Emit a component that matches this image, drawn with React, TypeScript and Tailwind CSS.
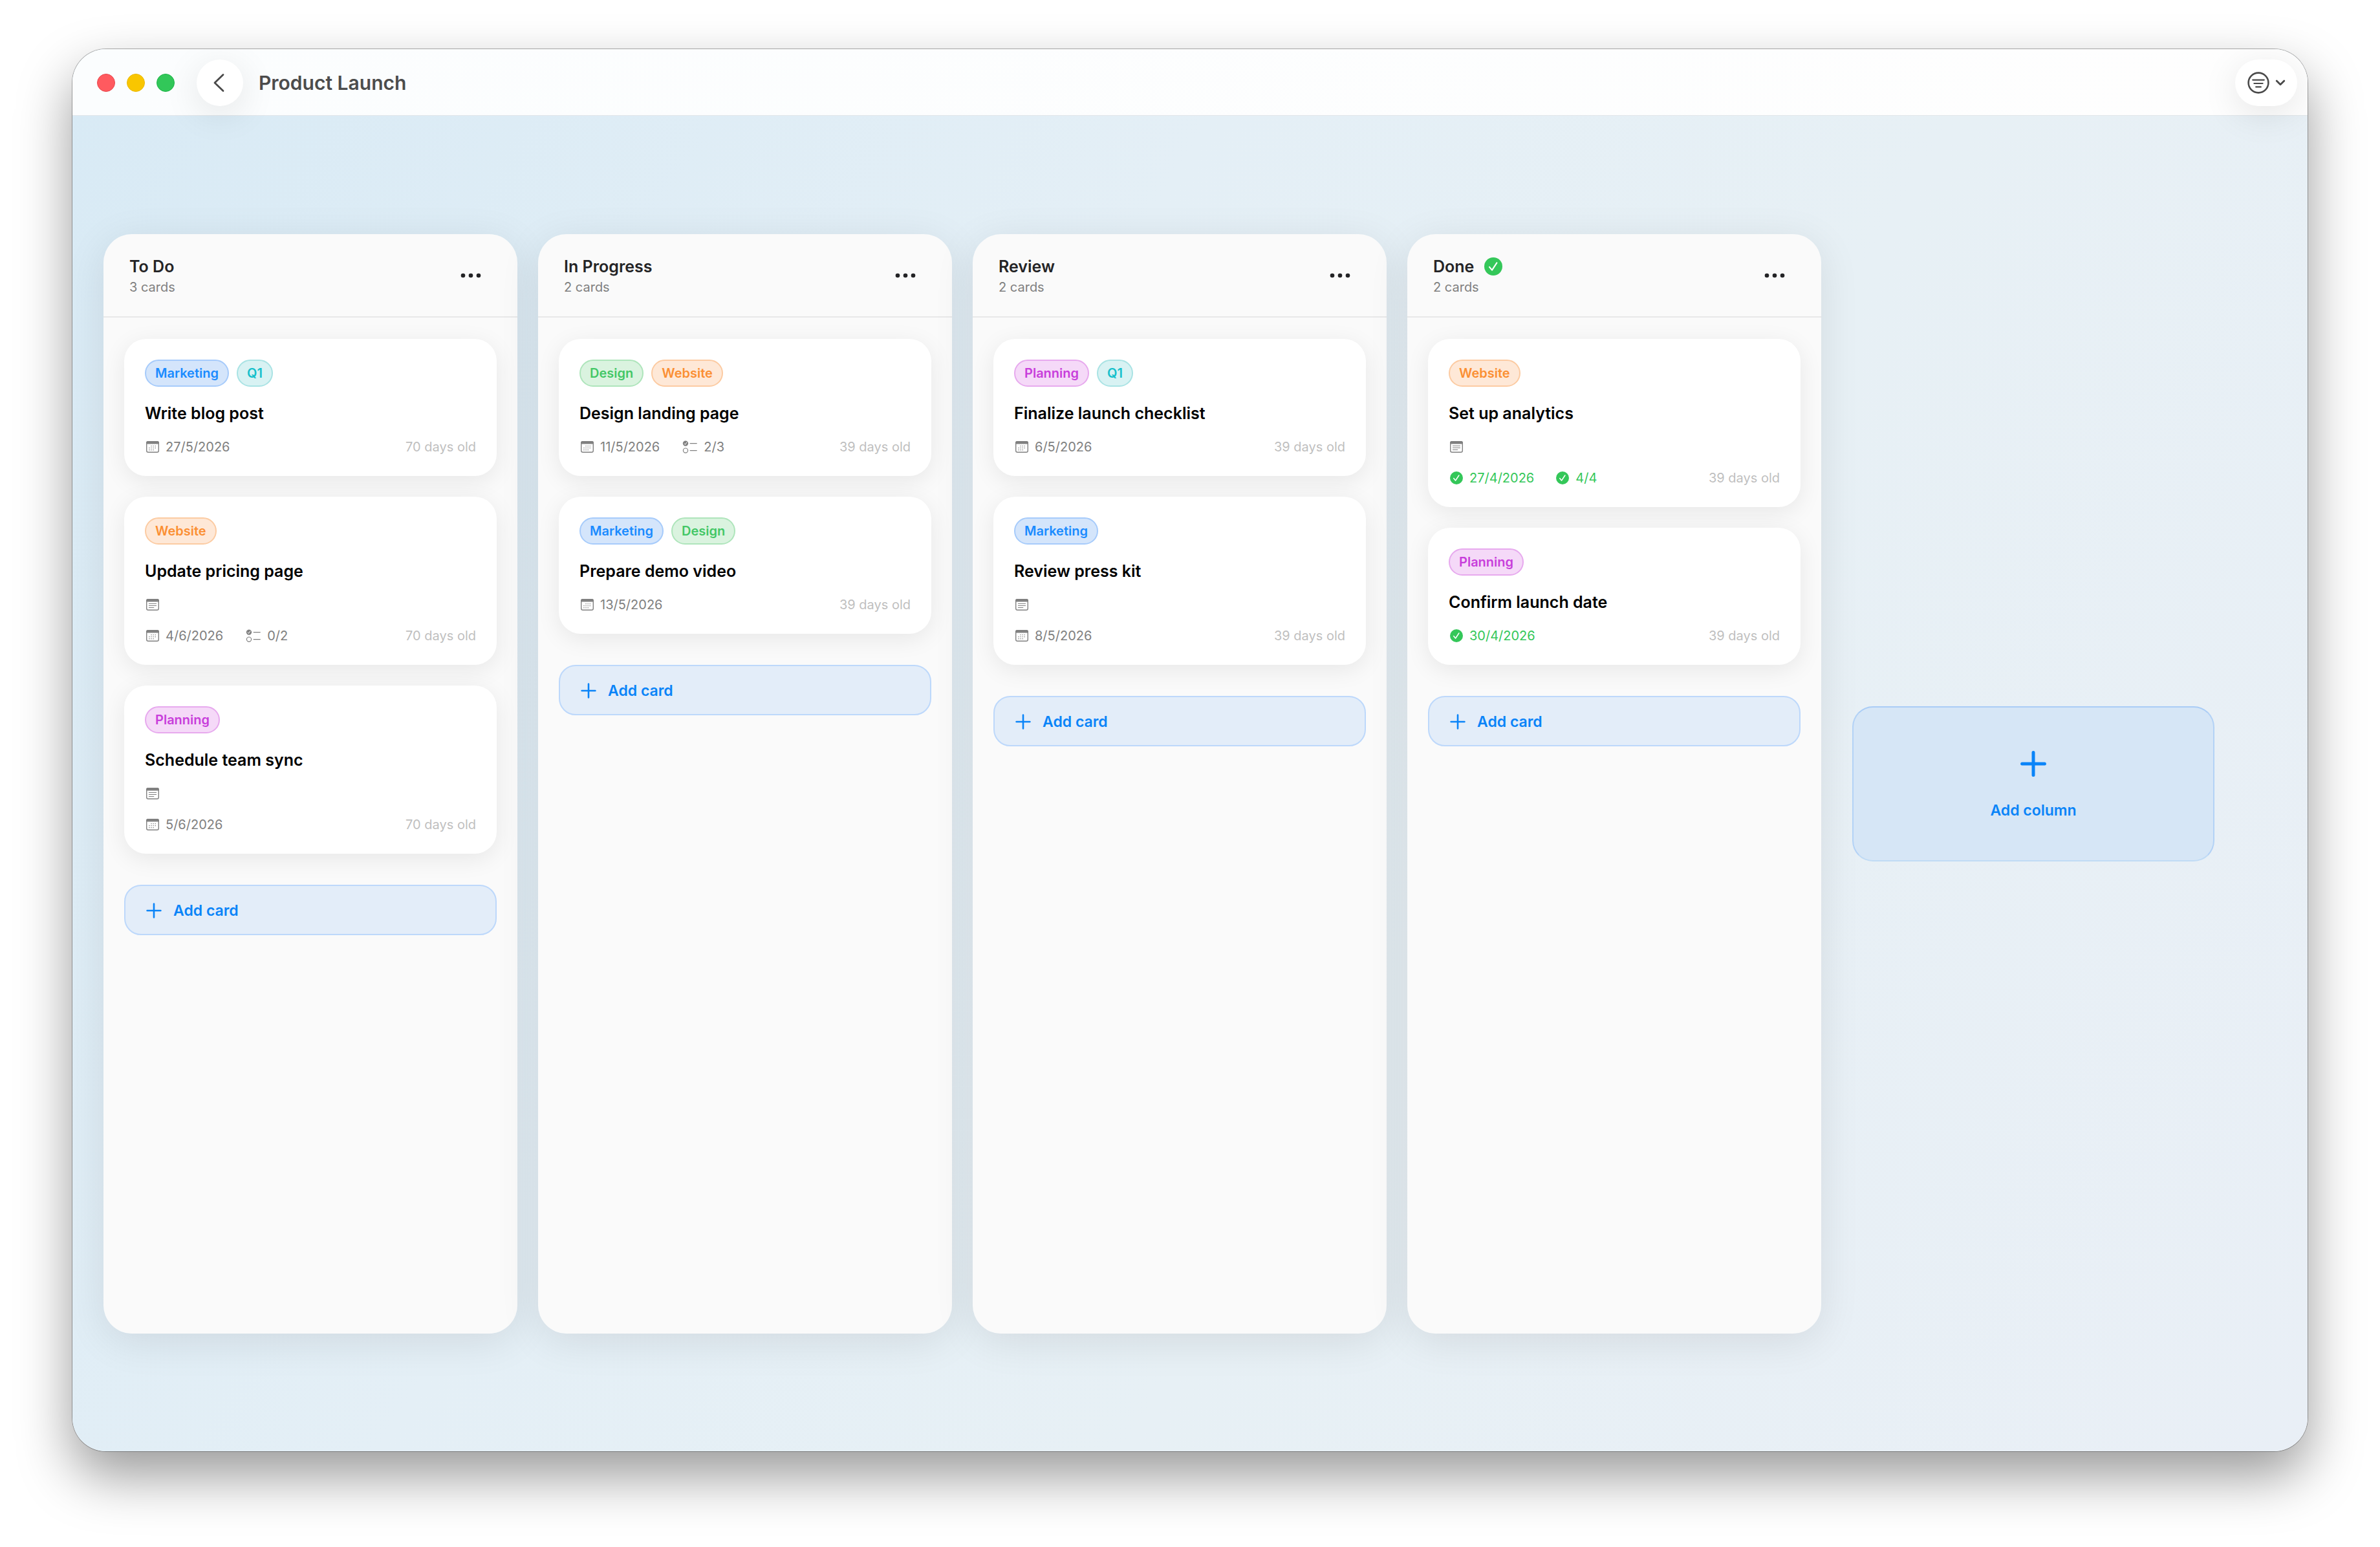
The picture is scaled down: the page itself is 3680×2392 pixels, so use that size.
import { useState } from "react";
import type { ReactNode } from "react";

type TagName = "Marketing" | "Q1" | "Design" | "Website" | "Planning";

type Card = {
  title: string;
  tags: TagName[];
  date: string;
  age: string;
  checklist?: string;
  notes?: boolean;
};

type Column = {
  name: string;
  done?: boolean;
  cards: Card[];
};

const TAG_STYLES: Record<TagName, string> = {
  Marketing: "border-[#a6cbfb] bg-[#d4e5fb] text-[#1a8bff]",
  Q1: "border-[#a9e3e4] bg-[#d8f2f3] text-[#16c0cb]",
  Design: "border-[#aee5bb] bg-[#daf3df] text-[#43c766]",
  Website: "border-[#fccba2] bg-[#fee8d7] text-[#fb8f33]",
  Planning: "border-[#e7a9ee] bg-[#f5d9f8] text-[#c83edb]"
};

const COLUMNS: Column[] = [
  {
    name: "To Do",
    cards: [
      { title: "Write blog post", tags: ["Marketing", "Q1"], date: "27/5/2026", age: "70 days old" },
      { title: "Update pricing page", tags: ["Website"], date: "4/6/2026", age: "70 days old", checklist: "0/2", notes: true },
      { title: "Schedule team sync", tags: ["Planning"], date: "5/6/2026", age: "70 days old", notes: true }
    ]
  },
  {
    name: "In Progress",
    cards: [
      { title: "Design landing page", tags: ["Design", "Website"], date: "11/5/2026", age: "39 days old", checklist: "2/3" },
      { title: "Prepare demo video", tags: ["Marketing", "Design"], date: "13/5/2026", age: "39 days old" }
    ]
  },
  {
    name: "Review",
    cards: [
      { title: "Finalize launch checklist", tags: ["Planning", "Q1"], date: "6/5/2026", age: "39 days old" },
      { title: "Review press kit", tags: ["Marketing"], date: "8/5/2026", age: "39 days old", notes: true }
    ]
  },
  {
    name: "Done",
    done: true,
    cards: [
      { title: "Set up analytics", tags: ["Website"], date: "27/4/2026", age: "39 days old", checklist: "4/4", notes: true },
      { title: "Confirm launch date", tags: ["Planning"], date: "30/4/2026", age: "39 days old" }
    ]
  }
];

function CheckCircle({ className }: { className: string }) {
  return (
    <svg viewBox="0 0 28 28" className={className} aria-hidden>
      <circle cx="14" cy="14" r="14" fill="#34c759" />
      <path d="M8 14.8l4 4.8 7.4-11.2" fill="none" stroke="#fff" strokeWidth="2.1" strokeLinecap="round" strokeLinejoin="round" />
    </svg>
  );
}

function CalendarIcon() {
  return (
    <svg viewBox="0 0 24 24" className="h-6 w-6 shrink-0" aria-hidden>
      <rect x="2.7" y="3.7" width="18.6" height="16.6" rx="2.6" fill="none" stroke="#808080" strokeWidth="1.4" />
      <path d="M2 7.6V6a3 3 0 0 1 3-3h14a3 3 0 0 1 3 3v1.6z" fill="#808080" />
      <g fill="#808080">
        <rect x="9.4" y="10" width="1.3" height="1.3" />
        <rect x="12.5" y="10" width="1.3" height="1.3" />
        <rect x="15.6" y="10" width="1.3" height="1.3" />
        <rect x="6.3" y="13" width="1.3" height="1.3" />
        <rect x="9.4" y="13" width="1.3" height="1.3" />
        <rect x="12.5" y="13" width="1.3" height="1.3" />
        <rect x="15.6" y="13" width="1.3" height="1.3" />
        <rect x="6.3" y="16" width="1.3" height="1.3" />
        <rect x="9.4" y="16" width="1.3" height="1.3" />
        <rect x="12.5" y="16" width="1.3" height="1.3" />
      </g>
    </svg>
  );
}

function NotesIcon() {
  return (
    <svg viewBox="0 0 24 24" className="h-6 w-6 shrink-0" role="img" aria-label="Notes">
      <rect x="2.7" y="3.7" width="18.6" height="16.6" rx="2.6" fill="none" stroke="#808080" strokeWidth="1.4" />
      <path d="M2 7.4V6a3 3 0 0 1 3-3h14a3 3 0 0 1 3 3v1.4z" fill="#808080" />
      <path d="M6.4 10.5h11.2M6.4 13.5h11.2M6.4 16.5h7.4" stroke="#808080" strokeWidth="1.1" strokeLinecap="round" />
    </svg>
  );
}

function ChecklistIcon() {
  return (
    <svg viewBox="0 0 28 24" className="h-6 w-7 shrink-0" aria-hidden>
      <circle cx="8" cy="6.6" r="4.2" fill="#808080" />
      <path d="M6.2 6.9l1.3 1.5 2.3-3.4" fill="none" stroke="#fff" strokeWidth="1" strokeLinecap="round" strokeLinejoin="round" />
      <circle cx="8" cy="17.6" r="3.6" fill="none" stroke="#808080" strokeWidth="1.2" />
      <path d="M15.2 6.6h10M15.2 17.6h10" stroke="#808080" strokeWidth="1.4" strokeLinecap="round" />
    </svg>
  );
}

function Meta({ icon, done, children }: { icon: ReactNode; done?: boolean; children: ReactNode }) {
  return (
    <span className={`flex items-center gap-2 ${done ? "text-[#34c759]" : "text-[#808080]"}`}>
      {done ? (
        <span className="flex h-6 w-6 items-center justify-center">
          <CheckCircle className="h-5 w-5" />
        </span>
      ) : (
        icon
      )}
      {children}
    </span>
  );
}

function BoardCard({ card, done }: { card: Card; done?: boolean }) {
  return (
    <article className="rounded-[34px] bg-white p-8 shadow-[0_8px_36px_rgba(0,0,0,0.08)]">
      <div className="flex gap-3">
        {card.tags.map((tag) => (
          <span
            key={tag}
            className={`flex h-[42px] items-center rounded-full border-2 px-[14px] text-[20px] font-semibold leading-6 ${TAG_STYLES[tag]}`}
          >
            {tag}
          </span>
        ))}
      </div>
      <h3 className="mt-[25px] text-[25px] font-semibold leading-8 text-black">{card.title}</h3>
      {card.notes ? (
        <div className="mt-6 flex h-6 items-center">
          <NotesIcon />
        </div>
      ) : null}
      <div className="mt-[23px] flex h-[26px] items-center gap-8 text-[20px] leading-6">
        <Meta icon={<CalendarIcon />} done={done}>
          {card.date}
        </Meta>
        {card.checklist ? (
          <Meta icon={<ChecklistIcon />} done={done}>
            {card.checklist}
          </Meta>
        ) : null}
        <span className="ml-auto text-[#bfbfbf]">{card.age}</span>
      </div>
    </article>
  );
}

function BoardColumn({ column }: { column: Column }) {
  return (
    <section className="flex h-full w-[640px] shrink-0 flex-col overflow-clip rounded-[44px] bg-[#fafafa]">
      <header className="flex h-[129px] shrink-0 items-center justify-between border-b-2 border-[#e8e8e9] px-10">
        <div className="pt-1">
          <div className="flex h-8 items-center gap-4">
            <h2 className="text-[25px] font-semibold leading-8 text-[#242426]">{column.name}</h2>
            {column.done ? <CheckCircle className="h-7 w-7" /> : null}
          </div>
          <p className="text-[20px] leading-8 text-[#808080]">{column.cards.length} cards</p>
        </div>
        <button type="button" aria-label={`${column.name} options`} className="flex h-12 w-16 items-center justify-center">
          <svg viewBox="0 0 32 8" className="h-2 w-8" fill="#242426" aria-hidden>
            <circle cx="4" cy="4" r="3.3" />
            <circle cx="16" cy="4" r="3.3" />
            <circle cx="28" cy="4" r="3.3" />
          </svg>
        </button>
      </header>
      <div className="flex flex-1 flex-col gap-8 px-8 pt-[33px]">
        {column.cards.map((card) => (
          <BoardCard key={card.title} card={card} done={column.done} />
        ))}
        <button
          type="button"
          className="mt-4 flex h-[78px] items-center gap-4 rounded-[26px] border-2 border-[#bdd8fb] bg-[#e3edf9] px-[30px] pt-0.5 text-[23px] font-semibold leading-8 text-[#0a84f8]"
        >
          <svg viewBox="0 0 28 28" className="h-7 w-7" aria-hidden>
            <path d="M14 3.6v20.8M3.6 14h20.8" stroke="currentColor" strokeWidth="2.6" strokeLinecap="round" />
          </svg>
          Add card
        </button>
      </div>
    </section>
  );
}

export default function App() {
  const [columns] = useState<Column[]>(COLUMNS);

  return (
    <div className="flex min-h-screen bg-white px-28 pb-[148px] pt-19 font-['Inter','Liberation_Sans',sans-serif]">
      <div className="flex min-w-0 flex-1 flex-col overflow-clip rounded-[52px] bg-[linear-gradient(122deg,#d8eaf5_0%,#e4eff6_38%,#e7f0f5_62%,#e9eff6_100%)] shadow-[0_0_0_1px_rgba(0,0,0,0.3),0_38px_84px_rgba(0,0,0,0.4)]">
        <header className="flex h-[103px] shrink-0 items-center border-b border-[#e2e6e9] bg-linear-to-r from-[#fbfdfe] to-[#fefefe] pl-[38px] pr-4 pt-0.5">
          <div className="flex gap-[18px]">
            <button type="button" aria-label="Close" className="h-7 w-7 rounded-full border border-[#e8474d] bg-[#ff5a5f]" />
            <button type="button" aria-label="Minimize" className="h-7 w-7 rounded-full border border-[#eab800] bg-[#f9c600]" />
            <button type="button" aria-label="Zoom" className="h-7 w-7 rounded-full border border-[#1db548] bg-[#32c759]" />
          </div>
          <button
            type="button"
            aria-label="Back"
            className="relative ml-[34px] flex h-18 w-18 items-center justify-center rounded-full bg-white shadow-[0_12px_56px_rgba(0,0,0,0.1)]"
          >
            <svg viewBox="0 0 36 36" className="h-9 w-9" fill="none" aria-hidden>
              <path d="M23 5.5L10 18l13 12.5" stroke="#4a4a4a" strokeWidth="2.8" strokeLinecap="round" strokeLinejoin="round" />
            </svg>
          </button>
          <h1 className="ml-6 text-[30px] font-semibold leading-10 text-[#4c4c4c]">Product Launch</h1>
          <button
            type="button"
            aria-label="Filter"
            className="relative ml-auto flex h-18 w-24 items-center justify-center gap-2 rounded-full bg-white shadow-[0_12px_56px_rgba(0,0,0,0.1)]"
          >
            <svg viewBox="0 0 36 36" className="h-9 w-9" fill="none" stroke="#4a4a4a" strokeLinecap="round" aria-hidden>
              <circle cx="18" cy="18" r="15.4" strokeWidth="2.6" />
              <path d="M9.2 13.6h17.6M11.4 19h13.2M14.2 24.4h7.6" strokeWidth="2.2" />
            </svg>
            <svg viewBox="0 0 16 16" className="h-4 w-4" fill="none" aria-hidden>
              <path d="M2.2 5l5.8 5.8L13.8 5" stroke="#4a4a4a" strokeWidth="2.8" strokeLinecap="round" strokeLinejoin="round" />
            </svg>
          </button>
        </header>
        <main className="flex flex-1 items-center gap-12 px-12 pb-[182px] pt-[183px]">
          <div className="flex gap-8 self-stretch">
            {columns.map((column) => (
              <div key={column.name} className="rounded-[44px] shadow-[0_12px_64px_rgba(0,0,0,0.09)]">
                <BoardColumn column={column} />
              </div>
            ))}
          </div>
          <button
            type="button"
            className="flex h-60 w-[560px] shrink-0 flex-col items-center justify-center gap-8 rounded-[32px] border-2 border-x-[#b3d2f6] border-b-[#c0dbf5] border-t-[#a9ccf6] bg-[#d6e6f6] pt-0.5 text-[23px] font-semibold leading-8 text-[#0a84f8]"
          >
            <svg viewBox="0 0 48 48" className="h-12 w-12" aria-hidden>
              <path d="M24 6.6v34.8M6.6 24h34.8" stroke="currentColor" strokeWidth="5" strokeLinecap="round" />
            </svg>
            Add column
          </button>
        </main>
      </div>
    </div>
  );
}
